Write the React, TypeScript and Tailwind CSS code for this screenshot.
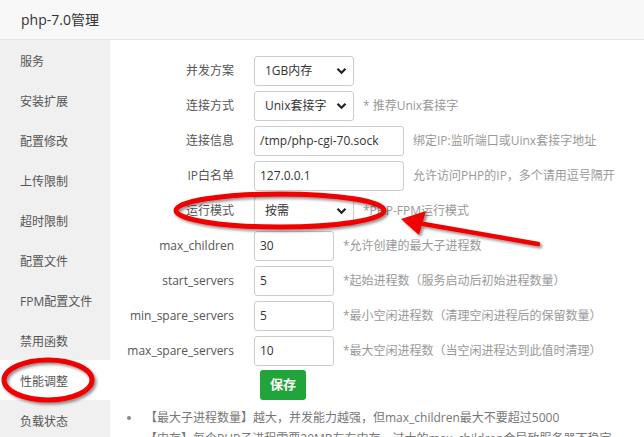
import React from 'react';

const FONT = { fontFamily: '"Open Sans", "Noto Sans CJK SC", sans-serif' };

const MENU = ['服务', '安装扩展', '配置修改', '上传限制', '超时限制', '配置文件', 'FPM配置文件', '禁用函数', '性能调整', '负载状态'];

const Chevron: React.FC = () => (
  <svg width="11" height="8" viewBox="0 0 11 8" className="shrink-0">
    <path d="M1.5 1.8 L5.5 5.8 L9.5 1.8" fill="none" stroke="#222" strokeWidth="2.2" />
  </svg>
);

const SelectBox: React.FC<{ value: string }> = ({ value }) => (
  <div className="w-[100px] h-[30px] border border-[#cccccc] rounded-[3px] bg-white flex items-center justify-between pl-[10px] pr-[6px] text-[12px] text-[#333]">
    <span>{value}</span>
    <Chevron />
  </div>
);

const TextBox: React.FC<{ value: string; w: string }> = ({ value, w }) => (
  <div className={`${w} h-[30px] border border-[#cccccc] rounded-[3px] bg-white flex items-center pl-[5px] text-[12px] text-[#333]`}>
    {value}
  </div>
);

const Row: React.FC<{ label: string; children: React.ReactNode; hint?: string }> = ({ label, children, hint }) => (
  <div className="flex items-center h-[30px] mb-[5px]">
    <div className="w-[124px] text-right text-[12px] text-[#555]">{label}</div>
    <div className="ml-[20px]">{children}</div>
    {hint && <div className="ml-[9px] text-[12px] text-[#999] whitespace-nowrap">{hint}</div>}
  </div>
);

const App: React.FC = () => {
  return (
    <div className="relative w-[644px] h-[437px] overflow-hidden bg-white" style={FONT}>
      <div className="h-[40px] bg-[#f8f8f8] border-b border-[#e6e6e6] flex items-center pl-[21px] text-[14px] text-[#333]">
        php-7.0管理
      </div>
      <div className="flex">
        <div className="w-[110px] h-[400px] bg-[#f0f0f0] shrink-0">
          {MENU.map((m, i) => (
            <div
              key={m}
              className={`h-[40px] flex items-center pl-[20px] pt-[3px] text-[12px] text-[#555] ${i === 8 ? 'bg-white' : ''}`}
            >
              {m}
            </div>
          ))}
        </div>
        <div className="flex-1 pt-[16px]">
          <Row label="并发方案"><SelectBox value="1GB内存" /></Row>
          <Row label="连接方式" hint="* 推荐Unix套接字"><SelectBox value="Unix套接字" /></Row>
          <Row label="连接信息" hint="绑定IP:监听端口或Uinx套接字地址"><TextBox w="w-[150px]" value="/tmp/php-cgi-70.sock" /></Row>
          <Row label="IP白名单" hint="允许访问PHP的IP，多个请用逗号隔开"><TextBox w="w-[150px]" value="127.0.0.1" /></Row>
          <Row label="运行模式" hint="*PHP-FPM运行模式"><SelectBox value="按需" /></Row>
          <Row label="max_children" hint="*允许创建的最大子进程数"><TextBox w="w-[80px]" value="30" /></Row>
          <Row label="start_servers" hint="*起始进程数（服务启动后初始进程数量）"><TextBox w="w-[80px]" value="5" /></Row>
          <Row label="min_spare_servers" hint="*最小空闲进程数（清理空闲进程后的保留数量）"><TextBox w="w-[80px]" value="5" /></Row>
          <Row label="max_spare_servers" hint="*最大空闲进程数（当空闲进程达到此值时清理）"><TextBox w="w-[80px]" value="10" /></Row>
          <div className="pl-[150px] -mt-[1px]">
            <button className="w-[46px] h-[30px] bg-[#20a53a] rounded-[3px] text-white text-[13px] font-bold">保存</button>
          </div>
          <ul className="mt-[7px] pl-[17px] text-[12px] text-[#777] leading-[21px]">
            <li className="flex items-center whitespace-nowrap">
              <span className="w-[4px] h-[4px] rounded-full bg-[#888] mr-[14px]" />
              【最大子进程数量】越大，并发能力越强，但max_children最大不要超过5000
            </li>
            <li className="flex items-center whitespace-nowrap">
              <span className="w-[4px] h-[4px] rounded-full bg-[#888] mr-[14px]" />
              【内存】每个PHP子进程需要20MB左右内存，过大的max_children会导致服务器不稳定
            </li>
          </ul>
        </div>
      </div>

      <svg className="absolute inset-0 pointer-events-none" width="644" height="437">
        <defs>
          <filter id="sh" x="-20%" y="-40%" width="140%" height="180%">
            <feGaussianBlur in="SourceAlpha" stdDeviation="1.5" />
            <feOffset dx="1.5" dy="2" result="b" />
            <feComponentTransfer><feFuncA type="linear" slope="0.45" /></feComponentTransfer>
            <feMerge><feMergeNode /><feMergeNode in="SourceGraphic" /></feMerge>
          </filter>
        </defs>
        <g filter="url(#sh)">
          <ellipse cx="280" cy="210.5" rx="104" ry="16.5" fill="none" stroke="#f00000" strokeWidth="5" />
          <ellipse cx="48" cy="380" rx="44" ry="20" fill="none" stroke="#f00000" strokeWidth="5" />
          <line x1="538" y1="244" x2="418" y2="223" stroke="#f00000" strokeWidth="4.5" strokeLinecap="round" />
          <polygon points="401,219 426,211 419,235" fill="#f00000" />
        </g>
      </svg>
    </div>
  );
};

export default App;
